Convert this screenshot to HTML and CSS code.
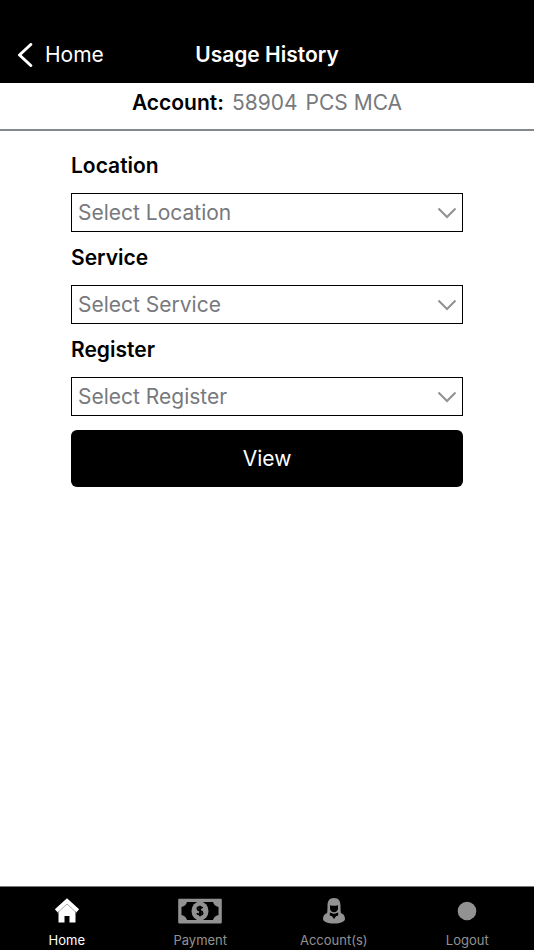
FILE: index.html
```html
<!DOCTYPE html>
<html lang="en">
<head>
<meta charset="utf-8">
<meta name="viewport" content="width=device-width, initial-scale=1">
<title>Usage History</title>
<link rel="stylesheet" href="styles.css">
</head>
<body>
<header class="topbar">
  <a class="back" href="#home">
    <svg class="back-icon" viewBox="0 0 16 24" aria-hidden="true"><path d="M13.800 1.500 2.500 12l11.300 10.500"/></svg>
    <span>Home</span>
  </a>
  <h1 class="title">Usage History</h1>
</header>
<main class="content">
  <p class="account"><strong class="account-label">Account:</strong><span>58904</span><span>PCS MCA</span></p>
  <form class="form">
    <div class="field">
      <label for="location">Location</label>
      <div class="picker">
        <select id="location"><option>Select Location</option></select>
        <svg class="chevron" viewBox="0 0 20 12" aria-hidden="true"><path d="M1.500 1.500 10 10l8.500-8.500"/></svg>
      </div>
    </div>
    <div class="field">
      <label for="service">Service</label>
      <div class="picker">
        <select id="service"><option>Select Service</option></select>
        <svg class="chevron" viewBox="0 0 20 12" aria-hidden="true"><path d="M1.500 1.500 10 10l8.500-8.500"/></svg>
      </div>
    </div>
    <div class="field">
      <label for="register">Register</label>
      <div class="picker">
        <select id="register"><option>Select Register</option></select>
        <svg class="chevron" viewBox="0 0 20 12" aria-hidden="true"><path d="M1.500 1.500 10 10l8.500-8.500"/></svg>
      </div>
    </div>
    <button class="view" type="button">View</button>
  </form>
</main>
<nav class="tabs">
  <a class="tab active" href="#home">
    <svg class="tab-icon" viewBox="0 0 44 26" aria-hidden="true">
      <path fill="currentColor" d="M13.500 12v12.500h6V18h5v6.500h6V12L22 4.500z"/>
      <path class="roof" d="M11.200 12.800 22 3l10.800 9.800"/>
      <path class="roof-line" d="M12.500 14.800 22 6l9.500 8.800"/>
    </svg>
    <span>Home</span>
  </a>
  <a class="tab" href="#payment">
    <svg class="tab-icon" viewBox="0 0 44 26" aria-hidden="true">
      <path fill="currentColor" fill-rule="evenodd" d="M1 .8h42a.8.8 0 0 1 .8.8v23a.8.8 0 0 1-.8.8H1a.8.8 0 0 1-.8-.8v-23A.8.8 0 0 1 1 .8zM9 4Q8 8 3.500 9v8Q8 18 9 22h26q1-4 5.500-5V9Q36 8 35 4z"/>
      <ellipse cx="22" cy="13" rx="8.500" ry="9.500" fill="currentColor"/>
      <path class="dollar" d="M24.500 10.300c-1-1.800-5-1.800-5 .4 0 2.500 5 1.700 5 4.200 0 2.300-4.500 2.200-5.500.2M22 7.800v10.400"/>
    </svg>
    <span>Payment</span>
  </a>
  <a class="tab" href="#accounts">
    <svg class="tab-icon" viewBox="0 0 44 26" aria-hidden="true">
      <path fill="currentColor" d="M22 0c-5 0-6.500 3.500-6.500 8 0 3-.1 5-.4 7-2.800 1-4.100 3-4.100 6 0 2.500 4.500 4.500 11 4.500s11-2 11-4.500c0-3-1.300-5-4.100-6-.3-2-.4-4-.4-7 0-4.500-1.500-8-6.500-8z"/>
      <path class="cutout" d="M18 7.200q4 1.200 8 0v3.300c0 2.200-2 3.700-4 3.700s-4-1.500-4-3.700zM17.800 14.500l3.700 1.200h1l3.700-1.200v3l-2.200.7-2 2.800-2-2.800-2.200-.7z"/>
    </svg>
    <span>Account(s)</span>
  </a>
  <a class="tab" href="#logout">
    <svg class="tab-icon" viewBox="0 0 44 26" aria-hidden="true"><circle cx="22" cy="13" r="9.300" fill="currentColor"/></svg>
    <span>Logout</span>
  </a>
</nav>
</body>
</html>
```

FILE: styles.css
```css
* {
  box-sizing: border-box;
}

body {
  margin: 0;
  min-height: 100vh;
  display: flex;
  flex-direction: column;
  background: #fff;
  color: #000;
  font: 21px/24px Inter, "Liberation Sans", sans-serif;
}

a {
  color: inherit;
  text-decoration: none;
}

.topbar {
  display: grid;
  grid-template-columns: 1fr auto 1fr;
  align-items: center;
  padding: 43px 17px 16px;
  background: #000;
  color: #fff;
}

.back {
  display: flex;
  align-items: center;
  gap: 12px;
}

.back-icon {
  width: 16px;
  height: 24px;
  fill: none;
  stroke: #fff;
  stroke-width: 3;
  stroke-linecap: round;
  stroke-linejoin: round;
}

.title {
  margin: 0;
  font-size: 21px;
  font-weight: 600;
}

.content {
  flex: 1;
}

.account {
  display: flex;
  justify-content: center;
  gap: 8px;
  margin: 0;
  padding: 8px 0 14px;
  border-bottom: 2px solid #85888b;
  color: #77797d;
}

.account-label {
  color: #000;
  font-weight: 600;
}

.form {
  display: flex;
  flex-direction: column;
  gap: 14px;
  padding: 23px 71px;
}

.field {
  display: flex;
  flex-direction: column;
  gap: 15px;
}

.field label {
  font-weight: 600;
}

.picker {
  display: grid;
  align-items: center;
}

.picker > * {
  grid-area: 1 / 1;
}

.picker select {
  appearance: none;
  width: 100%;
  height: 39px;
  padding: 0 32px 0 6px;
  border: 1px solid #000;
  border-radius: 0;
  background: #fff;
  color: #77797d;
  font: inherit;
}

.chevron {
  justify-self: end;
  width: 20px;
  height: 12px;
  margin-right: 6px;
  fill: none;
  stroke: #8f9194;
  stroke-width: 2;
  pointer-events: none;
}

.view {
  height: 57px;
  border: 0;
  border-radius: 6px;
  background: #000;
  color: #fff;
  font: inherit;
}

.tabs {
  display: grid;
  grid-template-columns: repeat(4, 1fr);
  padding: 11px 0 2px;
  border-top: 1px solid #77797d;
  background: #000;
  color: #929292;
  font-size: 13px;
  line-height: 16px;
}

.tab {
  display: flex;
  flex-direction: column;
  align-items: center;
  gap: 8px;
}

.tab.active {
  color: #fff;
}

.tab-icon {
  width: 44px;
  height: 26px;
}

.roof {
  fill: none;
  stroke: currentColor;
  stroke-width: 4;
}

.roof-line {
  fill: none;
  stroke: #aaa;
  stroke-width: 1;
}

.dollar {
  fill: none;
  stroke: #000;
  stroke-width: 2;
}

.cutout {
  fill: #000;
}
```
